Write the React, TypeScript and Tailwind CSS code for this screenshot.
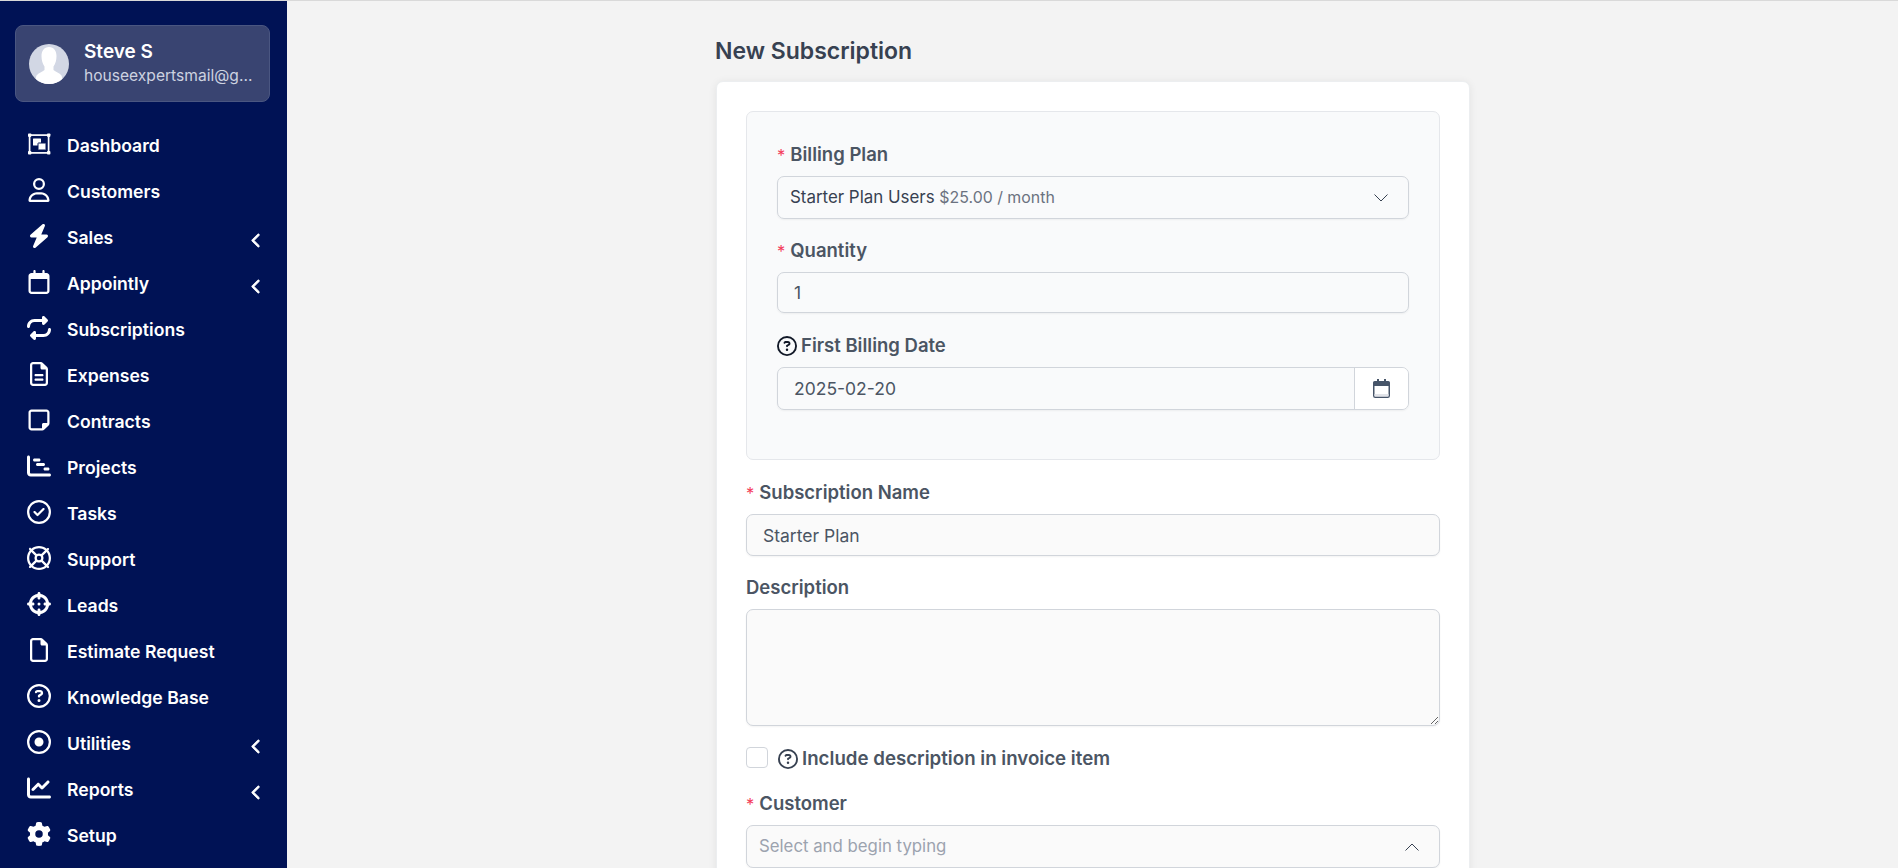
import React from "react";
import {
  FaRegUser, FaBolt, FaRegCalendar, FaRepeat, FaRegFileLines, FaRegNoteSticky,
  FaChartGantt, FaRegCircleCheck, FaRegLifeRing, FaCrosshairs, FaRegFile, FaRegCircleQuestion,
  FaRegCircleDot, FaChartLine, FaGear, FaChevronLeft,
} from "react-icons/fa6";

function DashIcon({ className }: { className?: string }) {
  return (
    <svg viewBox="-1 0 24 21" className={className} fill="currentColor">
      <rect x="1.6" y="1.6" width="19" height="17.8" fill="none" stroke="currentColor" strokeWidth="1.7" />
      <rect x="0" y="0" width="3.4" height="3.4" rx="0.8" />
      <rect x="19" y="0" width="3.4" height="3.4" rx="0.8" />
      <rect x="0" y="17.6" width="3.4" height="3.4" rx="0.8" />
      <rect x="19" y="17.6" width="3.4" height="3.4" rx="0.8" />
      <rect x="5" y="5" width="8" height="7" rx="0.5" />
      <rect x="10" y="9.500" width="8" height="7" rx="0.5" stroke="#001255" strokeWidth="1" />
    </svg>
  );
}

const nav: [string, React.ComponentType<{ className?: string }>, boolean][] = [
  ["Dashboard", DashIcon, false],
  ["Customers", FaRegUser, false],
  ["Sales", FaBolt, true],
  ["Appointly", FaRegCalendar, true],
  ["Subscriptions", FaRepeat, false],
  ["Expenses", FaRegFileLines, false],
  ["Contracts", FaRegNoteSticky, false],
  ["Projects", FaChartGantt, false],
  ["Tasks", FaRegCircleCheck, false],
  ["Support", FaRegLifeRing, false],
  ["Leads", FaCrosshairs, false],
  ["Estimate Request", FaRegFile, false],
  ["Knowledge Base", FaRegCircleQuestion, false],
  ["Utilities", FaRegCircleDot, true],
  ["Reports", FaChartLine, true],
  ["Setup", FaGear, false],
];

function Label({ children, req }: { children: React.ReactNode; req?: boolean }) {
  return (
    <div className="flex h-[22px] items-center pt-[2px] text-[18.5px] font-semibold text-[#4b5563]">
      {req && <span className="mr-[5px] text-[16.5px] font-normal text-[#f43f5e]">*</span>}
      {children}
    </div>
  );
}

function Help({ dark }: { dark?: boolean }) {
  return <FaRegCircleQuestion className={`mr-[4px] h-[20px] w-[20px] ${dark ? "text-[#111827]" : "text-[#374151]"}`} />;
}

function Chevron({ up }: { up?: boolean }) {
  return (
    <svg width="14" height="8" viewBox="0 0 14 8" fill="none" stroke="#374151" strokeWidth="1">
      <path d={up ? "M0.5 7.5 L7 1 L13.5 7.5" : "M0.5 0.5 L7 7 L13.5 0.5"} />
    </svg>
  );
}

const field = "rounded-[7px] border border-[#d1d5db] shadow-[0_1px_2px_rgba(0,0,0,0.05)] flex items-center text-[#4b5563]";

export default function App() {
  return (
    <div className="flex h-[868px] w-[1898px] overflow-hidden border-t border-[#d9d9d9] bg-[#f3f3f3] font-['Inter',sans-serif]">
      <aside className="w-[287px] shrink-0 bg-[#001255] pl-[15px] pr-[17px] pt-[24px]">
        <div className="flex h-[77px] items-center rounded-[8px] border border-[#4a5681] bg-[#394471] pl-[13px]">
          <div className="h-[40px] w-[40px] overflow-hidden rounded-full bg-[#d2d7e4]">
            <svg width="40" height="40" viewBox="0 0 40 40" fill="#fff">
              <path d="M20 3c5 0 7.500 4 7.500 9 0 4-1 7.500-3 10.500v3.500c2 2 6 3 8 5.500 1 2 .5 5 .5 8.500H7c0-3.500-.5-6.500.5-8.500 2-2.500 6-3.500 8-5.500v-3.500c-2-3-3-6.500-3-10.500 0-5 2.500-9 7.500-9z" />
            </svg>
          </div>
          <div className="ml-[15px] min-w-0 flex-1">
            <div className="text-[19px] font-semibold leading-[24px] text-white">Steve S</div>
            <div className="whitespace-nowrap text-[15.6px] leading-[24px] text-[#cdd2e0]">houseexpertsmail@g...</div>
          </div>
        </div>
        <nav className="mt-[21px]">
          {nav.map(([name, Icon, arrow]) => (
            <div key={name} className="flex h-[46px] items-center">
              <div className="flex w-[52px] justify-center pb-[4px] pr-[5px]">
                <Icon className="h-[24px] w-[24px] text-white" />
              </div>
              <span className="flex-1 text-[17.6px] font-semibold text-white">{name}</span>
              {arrow && <FaChevronLeft className="mr-[6px] mt-[4px] h-[15px] w-[15px] text-white [stroke-width:30]" />}
            </div>
          ))}
        </nav>
      </aside>
      <main className="min-w-0 flex-1">
        <div className="ml-[429px] w-[754px] pt-[37px]">
          <h1 className="-ml-[1px] h-[26px] text-[23px] font-semibold leading-[26px] text-[#374151]">New Subscription</h1>
          <section className="mt-[17px] h-[900px] rounded-[7px] border border-[#eceef0] bg-white px-[29px] pt-[29px] shadow-[0_1px_8px_rgba(0,0,0,0.07)]">
            <div className="h-[349px] rounded-[7px] border border-[#e5e7eb] bg-[#f9fafb] px-[30px] pt-[31px]">
              <Label req>Billing Plan</Label>
              <div className={`${field} mt-[11px] h-[43px] justify-between pl-[12px] pr-[20px]`}>
                <span className="text-[16.9px]">
                  <span className="text-[#374151]">Starter Plan Users</span>{" "}
                  <span className="text-[15.9px] text-[#6b7280]">$25.00 / month</span>
                </span>
                <Chevron />
              </div>
              <div className="mt-[20px]">
                <Label req>Quantity</Label>
              </div>
              <div className={`${field} mt-[11px] h-[41px] pl-[16px] pt-[2px] text-[17.5px]`}>1</div>
              <div className="mt-[21px]">
                <Label><Help dark />First Billing Date</Label>
              </div>
              <div className={`${field} mt-[11px] h-[43px] overflow-hidden text-[17.5px]`}>
                <span className="flex-1 pl-[16px] pt-[2px]">2025-02-20</span>
                <span className="flex h-full w-[54px] items-center justify-center border-l border-[#d1d5db] bg-white">
                  <svg width="17" height="19" viewBox="0 0 17 19">
                    <path d="M4 0h2v3H4zM11 0h2v3h-2z" fill="#475569" />
                    <path d="M2 2h13a2 2 0 0 1 2 2v3H0V4a2 2 0 0 1 2-2z" fill="#475569" />
                    <rect x="0.75" y="3" width="15.5" height="15.25" rx="1.5" fill="none" stroke="#475569" strokeWidth="1.5" />
                    <rect x="1.5" y="15" width="14" height="2.500" fill="#e2e4e9" />
                  </svg>
                </span>
              </div>
            </div>
            <div className="mt-[21px]">
              <Label req>Subscription Name</Label>
            </div>
            <div className={`${field} mt-[11px] h-[42px] bg-[#fafafa] pl-[16px] pt-[2px] text-[17.5px]`}>Starter Plan</div>
            <div className="mt-[20px]">
              <Label>Description</Label>
            </div>
            <textarea
              readOnly
              className="mt-[11px] block h-[117px] w-full rounded-[7px] border border-[#d1d5db] bg-[#fafafa] shadow-[0_1px_2px_rgba(0,0,0,0.05)]"
            />
            <div className="mt-[20px] flex h-[22px] items-center">
              <span className="h-[21px] w-[22px] rounded-[4px] border border-[#d1d5db] bg-white" />
              <span className="ml-[10px] flex items-center pt-[4px] text-[18.7px] font-semibold text-[#4b5563]">
                <Help />Include description in invoice item
              </span>
            </div>
            <div className="mt-[24px]">
              <Label req>Customer</Label>
            </div>
            <div className={`${field} mt-[11px] h-[43px] justify-between bg-[#fafafa] pl-[12px] pr-[20px] text-[16.8px] !text-[#9ca3af]`}>
              Select and begin typing
              <Chevron up />
            </div>
          </section>
        </div>
      </main>
    </div>
  );
}
